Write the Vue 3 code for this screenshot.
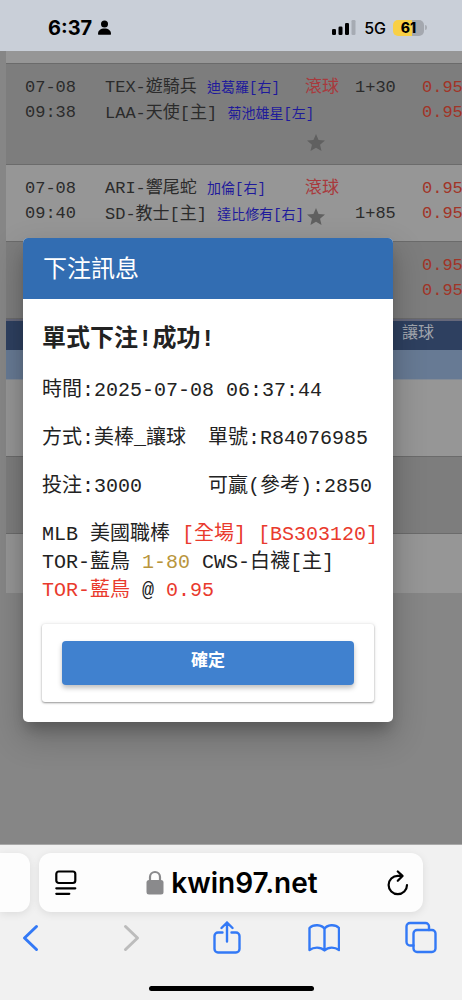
<script setup>
const games = [
  {
    tone: 'dark', tall: true, date: '07-08', time: '09:38',
    teams: [{ name: 'TEX-遊騎兵', pitcher: '迪葛羅[右]' }, { name: 'LAA-天使[主]', pitcher: '菊池雄星[左]' }],
    live: '滾球', lines: ['1+30', '']
  },
  {
    tone: 'light', tall: false, date: '07-08', time: '09:40',
    teams: [{ name: 'ARI-響尾蛇', pitcher: '加倫[右]' }, { name: 'SD-教士[主]', pitcher: '達比修有[右]' }],
    live: '滾球', lines: ['', '1+85']
  },
  { tone: 'dark', tall: false, date: '', time: '', teams: [], live: '', lines: ['', ''] }
]
const odds = ['0.95', '0.95']
</script>

<template>
  <div class="screen">
    <header class="status">
      <div class="clock">
        <span>6:37</span>
        <svg width="13" height="15" viewBox="0 0 13 15"><circle cx="6.5" cy="4" r="3.5" /><path d="M0 14c0-3.6 2.6-5.5 6.500-5.500S13 10.400 13 14c0 .6-.4.8-1 .8H1c-.6 0-1-.2-1-.8z" /></svg>
      </div>
      <div class="signals">
        <svg width="24" height="16" viewBox="0 0 24 16">
          <rect x="0" y="9" width="4" height="6" rx="1.300" /><rect x="6.500" y="6.500" width="4" height="8.500" rx="1.300" />
          <rect x="13" y="3" width="4" height="12" rx="1.300" /><rect x="19.500" y="0" width="4" height="15" rx="1.300" fill="#a6abb3" />
        </svg>
        <span class="net">5G</span>
        <span class="battery">61</span>
        <i class="nub"></i>
      </div>
    </header>

    <main class="page">
      <table class="board">
        <colgroup><col class="c-date"><col class="c-team"><col class="c-live"><col class="c-line"><col></colgroup>
        <tbody>
          <tr class="light stub"><td colspan="5"></td></tr>
          <tr v-for="(g, i) in games" :key="i" :class="[g.tone, { tall: g.tall }]">
            <td class="date"><div>{{ g.date }}</div><div>{{ g.time }}</div></td>
            <td class="teams">
              <div v-for="t in g.teams" :key="t.name">{{ t.name }} <span class="pitcher">{{ t.pitcher }}</span></div>
            </td>
            <td class="live">
              <template v-if="g.live">
                <div class="tag">{{ g.live }}</div>
                <div v-if="g.tall"></div>
                <div class="star"><svg width="18" height="18" viewBox="0 0 24 24"><path d="M12 18.300 19.400 22.800 17.400 14.400 24 8.700 15.400 8 12 0 8.600 8 0 8.700 6.600 14.400 4.600 22.800z" /></svg></div>
              </template>
            </td>
            <td><div v-for="(l, k) in g.lines" :key="k">{{ l }}</div></td>
            <td class="odds"><div v-for="(o, k) in odds" :key="k">{{ o }}</div></td>
          </tr>
          <tr class="head"><th colspan="3"></th><th colspan="2" class="cap">讓球</th></tr>
          <tr class="sub"><td colspan="5"></td></tr>
          <tr class="light"><td colspan="5"></td></tr>
          <tr class="dark"><td colspan="5"></td></tr>
          <tr class="light last"><td colspan="5"></td></tr>
        </tbody>
      </table>

      <div class="overlay">
        <section class="dialog" role="dialog" aria-labelledby="dlg-title">
          <h2 id="dlg-title">下注訊息</h2>
          <div class="body">
            <h3>單式下注!成功!</h3>
            <p>時間:2025-07-08 06:37:44</p>
            <p class="pair"><span>方式:美棒_讓球</span><span>單號:R84076985</span></p>
            <p class="pair"><span>投注:3000</span><span>可贏(參考):2850</span></p>
            <div class="bet">
              <div>MLB 美國職棒 <span class="red">[全場] [BS303120]</span></div>
              <div>TOR-藍鳥 <span class="gold">1-80</span> CWS-白襪[主]</div>
              <div><span class="red">TOR-藍鳥</span> @ <span class="red">0.95</span></div>
            </div>
            <div class="card"><button type="button" class="ok">確定</button></div>
          </div>
        </section>
      </div>
    </main>

    <footer class="safari">
      <div class="tabs">
        <div class="prev"></div>
        <div class="address">
          <button type="button" aria-label="Page menu">
            <svg width="22" height="26" viewBox="0 0 22 26" fill="none" stroke="#000" stroke-width="2.200" stroke-linecap="round"><rect x="1.300" y="1.500" width="19" height="11.500" rx="2.500" /><path d="M1.300 18.300h19M1.300 23.800h13" /></svg>
          </button>
          <div class="url">
            <svg width="18" height="25" viewBox="0 0 18 25"><path d="M4 11V7a5 5 0 0 1 10 0v4" fill="none" stroke="#8a8a8c" stroke-width="2.200" /><rect x="0.500" y="10" width="17" height="14.500" rx="2.500" fill="#8a8a8c" /></svg>
            <span>kwin97.net</span>
          </div>
          <button type="button" aria-label="Reload">
            <svg width="22" height="26" viewBox="0 0 22 26" fill="none" stroke="#000" stroke-width="2.200" stroke-linecap="round" stroke-linejoin="round"><path d="M20 15a9.200 9.200 0 1 1-9.200-9.200H15M10.800 1.500 15.500 5.900 10.800 10.800" /></svg>
          </button>
        </div>
      </div>
      <nav class="tools">
        <button type="button" aria-label="Back"><svg width="32" height="34" viewBox="0 0 32 34"><path d="M21.500 5.500 9.500 17l12 11.500" stroke-width="3" /></svg></button>
        <button type="button" aria-label="Forward" class="off"><svg width="32" height="34" viewBox="0 0 32 34"><path d="M12.500 5.500 24.500 17 12.500 28.500" stroke-width="3" /></svg></button>
        <button type="button" aria-label="Share"><svg width="32" height="34" viewBox="0 0 32 34"><path d="M12.500 11.500H8a3.500 3.500 0 0 0-3.500 3.500v13A3.500 3.500 0 0 0 8 31.500h18a3.500 3.500 0 0 0 3.500-3.500V15a3.500 3.500 0 0 0-3.500-3.500h-4.500M17 20.500V1.500M11.500 7 17 1.500 22.500 7" /></svg></button>
        <button type="button" aria-label="Bookmarks"><svg width="32" height="34" viewBox="0 0 32 34"><path d="M16.500 8C14 3.500 5.500 3 1.500 7V29C5.500 26 12.500 25.500 16.500 29.500 20.500 25.500 27 26 31 29V7C27 3 19 3.500 16.500 8zM16.500 8V29" /></svg></button>
        <button type="button" aria-label="Tabs"><svg width="32" height="34" viewBox="0 0 32 34"><path d="M8.500 24.500H5A3.500 3.500 0 0 1 1.500 21V5.500A3.500 3.500 0 0 1 5 2h15.500A3.500 3.500 0 0 1 24 5.500V9" /><rect x="8.500" y="9" width="22" height="22" rx="3.500" /></svg></button>
      </nav>
      <div class="home"></div>
    </footer>
  </div>
</template>

<style>
body { margin: 0; background: #f1f1f1; }
</style>

<style scoped>
* { box-sizing: border-box; }
button { border: 0; padding: 0; background: none; display: flex; font: inherit; }
svg { display: block; flex: none; }
.screen { min-height: 100vh; display: flex; flex-direction: column; overflow: hidden; font-family: "Liberation Mono", "Noto Sans CJK TC", monospace; }

.status { height: 51px; flex: none; background: #c9cfd8; display: flex; justify-content: space-between; align-items: center; padding: 4px 35px 0 48px; font-family: Inter, sans-serif; color: #000; }
.clock { display: flex; align-items: center; gap: 6px; font-size: 20px; font-weight: 700; }
.signals { display: flex; align-items: center; }
.net { font-size: 16px; font-weight: 500; margin: 0 7px 0 8px; }
.battery { width: 31px; height: 16px; border-radius: 5px; background: linear-gradient(90deg, #f9d045 60%, #a4a8af 60%); font-size: 14px; line-height: 16px; font-weight: 800; text-align: center; }
.nub { width: 2px; height: 5px; margin-left: 1px; background: #a9adb4; border-radius: 0 2px 2px 0; }

.page { flex: 1; position: relative; background: #868686; padding-left: 6px; border-bottom: 1px solid #a9a9a9; }
.board { width: 100%; table-layout: fixed; border-spacing: 0; font-size: 17px; line-height: 25px; color: #2b2b2b; }
.c-date { width: 99px; }
.c-team { width: 200px; }
.c-live { width: 50px; }
.c-line { width: 67px; }
.board td { padding: 11px 0 0; height: 77px; vertical-align: top; white-space: nowrap; border-bottom: 1px solid #6b6b6b; }
.board td div { min-height: 25px; }
.board .stub td { height: 13px; padding: 0; }
.board .tall td { height: 101px; }
.light { background: #969696; }
.dark { background: #7d7d7d; }
.board .date { padding-left: 19px; }
.board .teams { line-height: 26px; }
.board .live { line-height: 27px; }
.board .live div { min-height: 27px; }
.pitcher { font-size: 14px; color: #1e1a9b; }
.tag { color: #a83a3d; }
.board .live .tag { line-height: 25px; }
.star { display: flex; align-items: center; padding-left: 2px; fill: #606060; }
.odds { color: #a13427; }
.head th { height: 31px; padding: 0; background: #2e4060; border-top: 2px solid #66687a; }
.head .cap { font-size: 16px; line-height: 26px; font-weight: 400; color: #a0a5ad; text-align: left; padding: 0 0 3px 47px; }
.board .sub td { height: 30px; padding: 0; background: #677a94; border-color: #838b96; }
.board .last td { height: 59px; border: 0; }

.overlay { position: absolute; inset: 0; padding: 187px 69px 0 23px; }
.dialog { background: #fff; border-radius: 5px; overflow: hidden; box-shadow: 0 10px 14px -4px rgba(0, 0, 0, .22), 0 14px 32px 3px rgba(0, 0, 0, .2); color: #222; }
.dialog h2 { margin: 0; padding: 17px 20px 12px; background: #326db2; color: #fff; font-size: 24px; line-height: 32px; font-weight: 400; }
.body { padding: 23px 19px 20px; font-size: 20px; line-height: 28px; white-space: nowrap; }
.body h3 { margin: 0 0 19px; font-size: 24px; line-height: 36px; }
.body p { margin: 0 0 20px; }
.pair { display: grid; grid-template-columns: 1fr 1fr; }
.red { color: #e93a2d; }
.gold { color: #b9953c; }
.card { margin-top: 19px; padding: 17px 20px; border-radius: 3px; box-shadow: 0 1px 2px rgba(0, 0, 0, .38), 0 0 4px rgba(0, 0, 0, .1); }
.ok { width: 100%; height: 44px; align-items: center; justify-content: center; border-radius: 4px; background: #4081cf; color: #fff; font-size: 17px; line-height: 24px; font-weight: 700; padding-bottom: 2px; box-shadow: 0 3px 5px rgba(0, 0, 0, .25); }

.safari { flex: none; background: #f1f1f1; padding-top: 8px; font-family: Inter, sans-serif; }
.tabs { display: flex; gap: 9px; padding-right: 39px; }
.prev { width: 30px; height: 59px; flex: none; background: #fdfdfd; border-radius: 0 12px 12px 0; box-shadow: 0 2px 8px rgba(0, 0, 0, .09); }
.address { flex: 1; height: 59px; display: flex; align-items: center; justify-content: space-between; padding: 0 14px 0 16px; background: #fdfdfd; border-radius: 12px; box-shadow: 0 2px 8px rgba(0, 0, 0, .09); }
.url { display: flex; align-items: center; gap: 7px; font-size: 28px; line-height: 36px; font-weight: 600; color: #000; }
.tools { display: flex; justify-content: space-between; padding: 9px 25px 0 15px; }
.tools svg { fill: none; stroke: #3379f6; stroke-width: 2.4; stroke-linecap: round; stroke-linejoin: round; }
.tools .off svg { stroke: #bcbcbc; }
.home { width: 165px; height: 5px; margin: 31px auto 9px; background: #000; border-radius: 3px; }
</style>
